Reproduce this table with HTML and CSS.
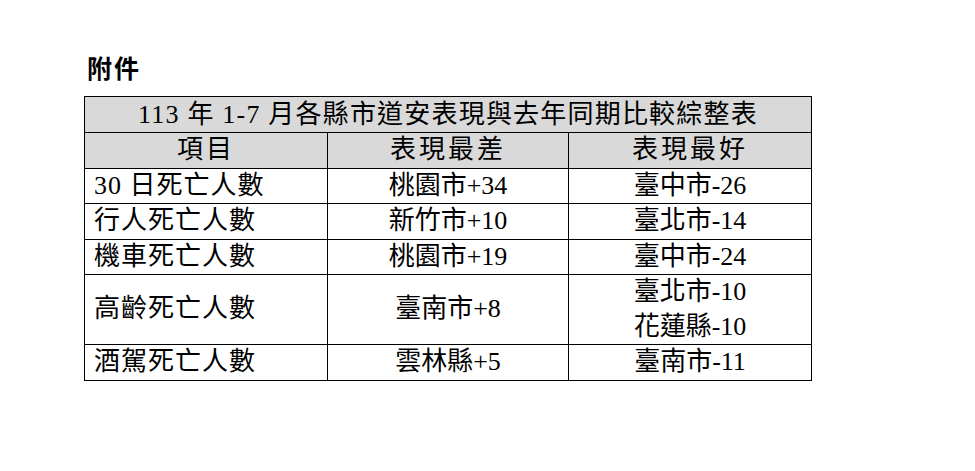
FILE: index.html
```html
<!DOCTYPE html>
<html lang="zh-Hant">
<head>
<meta charset="utf-8">
<link rel="stylesheet" href="styles.css">
</head>
<body>
<div class="page">
  <h1 class="att">附件</h1>
  <table class="summary">
    <colgroup>
      <col class="c1"><col class="c2"><col class="c3">
    </colgroup>
    <tr class="title-row"><th colspan="3">113 年 1-7 月各縣市道安表現與去年同期比較綜整表</th></tr>
    <tr class="head-row"><th>項目</th><th>表現最差</th><th>表現最好</th></tr>
    <tr><td class="item">30 日死亡人數</td><td>桃園市+34</td><td>臺中市-26</td></tr>
    <tr><td class="item">行人死亡人數</td><td>新竹市+10</td><td>臺北市-14</td></tr>
    <tr><td class="item">機車死亡人數</td><td>桃園市+19</td><td>臺中市-24</td></tr>
    <tr><td class="item">高齡死亡人數</td><td>臺南市+8</td><td>臺北市-10<br>花蓮縣-10</td></tr>
    <tr><td class="item">酒駕死亡人數</td><td>雲林縣+5</td><td>臺南市-11</td></tr>
  </table>
</div>
</body>
</html>
```
FILE: styles.css
```css
html, body {
  margin: 0;
  padding: 0;
  background: #fff;
}
.page {
  padding: 50px 0 0 84px;
  font-family: "Liberation Serif", "Noto Sans CJK TC", serif;
  color: #000;
}
.att {
  margin: 0 0 12px 3px;
  font-family: "Noto Sans CJK TC", sans-serif;
  font-size: 25px;
  font-weight: 700;
  line-height: 34px;
  letter-spacing: 2px;
}
.summary {
  border-collapse: collapse;
  table-layout: fixed;
  width: 727px;
  font-size: 26px;
}
.c1 { width: 243px; }
.c2 { width: 241px; }
.c3 { width: 243px; }
.summary th, .summary td {
  border: 1.5px solid #000;
  padding: 0;
  line-height: 34.5px;
  text-align: center;
  font-weight: 400;
  white-space: nowrap;
}
.title-row th {
  background: #d9d9d9;
  line-height: 35px;
  letter-spacing: 1.2px;
}
.head-row th {
  background: #d9d9d9;
  letter-spacing: 3px;
}
.summary td.item {
  text-align: left;
  padding-left: 9px;
  letter-spacing: 1px;
}
```
